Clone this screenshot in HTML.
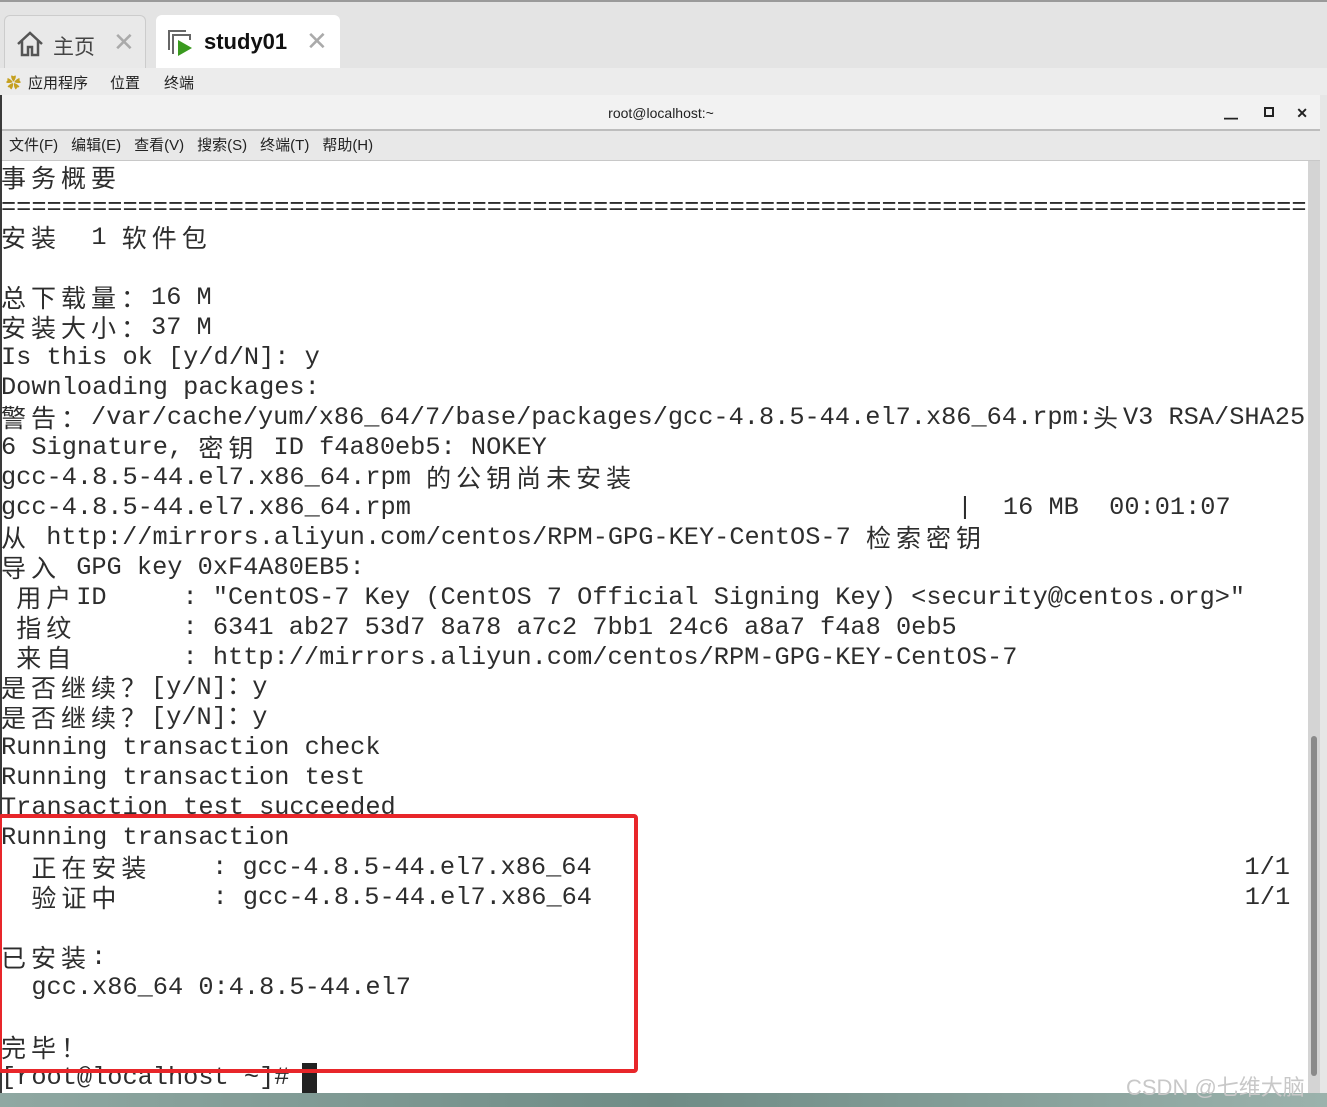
<!DOCTYPE html>
<html><head><meta charset="utf-8"><style>
*{margin:0;padding:0;box-sizing:border-box}
body{width:1327px;height:1107px;overflow:hidden;background:#e6e6e6;font-family:"Liberation Sans","Noto Sans CJK SC",sans-serif;position:relative}
.top{position:absolute;left:0;top:0;width:1327px;height:70px;background:#e4e4e4;border-top:2px solid #9a9a9a}
.tab{position:absolute;top:13px;height:57px;border-radius:6px 6px 0 0;font-size:21px;color:#444}
.bar2{position:absolute;left:0;top:68px;width:1327px;height:27px;background:#ececec;font-size:15px;color:#222}
.win{position:absolute;left:0;top:95px;width:1320px;height:1000px;background:#fff;border-left:2px solid #3a3a3a}
.title{position:absolute;left:0;top:0;width:100%;height:36px;background:#f2f2f2;border-bottom:2px solid #bdbdbd;text-align:center;font-size:14px;line-height:36px;color:#222}
.menu{position:absolute;left:0;top:36px;width:100%;height:30px;background:#e8e8e8;border-bottom:1px solid #c8c8c8;font-size:15px;line-height:30px;color:#222}
.menu span{margin-left:7px;margin-right:6px}
.sb{position:absolute;right:0;top:66px;width:12px;height:934px;background:#d4d4d4}
.thumb{position:absolute;left:3px;top:575px;width:6px;height:340px;background:#8a8a8a;border-radius:3px}
.term{position:absolute;left:1px;top:163px;width:1306px;font-family:"Liberation Mono",monospace;font-size:25.3px;color:#2d2d2d}
.l{height:30px;line-height:30px;white-space:pre;overflow:hidden}
.c{display:inline-block;vertical-align:top;height:30px;letter-spacing:5px;font-family:"Noto Sans CJK SC",sans-serif;line-height:28px;font-size:25px}
.bot{position:absolute;left:0;top:1093px;width:1327px;height:14px;background:linear-gradient(90deg,#8fa8a2,#6f8c86,#9bb2ac)}
.red{position:absolute;left:-2px;top:814px;width:640px;height:259px;border:4px solid #e8262a;border-radius:4px}
.cur{position:absolute;left:302px;top:1063px;width:15px;height:30px;background:#222}
</style></head><body>
<div class="top">
 <div class="tab" style="left:4px;width:142px;background:#e9e9e9;border:1px solid #ccc;border-bottom:none">
  <svg style="position:absolute;left:10px;top:14px" width="30" height="28" viewBox="0 0 30 28"><path d="M3 14 L15 3 L27 14 M7 11 V25 H13 V17 H17 V25 H23 V11" fill="none" stroke="#555" stroke-width="2.5"/></svg>
  <span style="position:absolute;left:48px;top:15px">主页</span>
  <span style="position:absolute;left:108px;top:11px;color:#aaa;font-size:26px">✕</span>
 </div>
 <div class="tab" style="left:156px;width:184px;background:#fff">
  <svg style="position:absolute;left:10px;top:13px" width="30" height="30" viewBox="0 0 30 30"><path d="M3 22 V3 H20 M7 26 V7 H24 V12" fill="none" stroke="#666" stroke-width="2"/><path d="M12 12 L26 20 L12 28 Z" fill="#3a9a1f"/></svg>
  <b style="position:absolute;left:48px;top:14px;color:#111;font-size:22px">study01</b>
  <span style="position:absolute;left:150px;top:11px;color:#aaa;font-size:26px">✕</span>
 </div>
</div>
<div class="bar2"><span style="position:absolute;left:6px;top:4px;color:#c5a020">✿</span><span style="position:absolute;left:28px;top:4px">应用程序</span><span style="position:absolute;left:110px;top:4px">位置</span><span style="position:absolute;left:164px;top:4px">终端</span></div>
<div class="win">
 <div class="title">root@localhost:~
  <span style="position:absolute;right:82px;top:0">▁</span>
  <span style="position:absolute;right:46px;top:12px;width:10px;height:10px;border:2px solid #222"></span>
  <span style="position:absolute;right:12px;top:0;font-weight:bold">✕</span>
 </div>
 <div class="menu"><span>文件(F)</span><span>编辑(E)</span><span>查看(V)</span><span>搜索(S)</span><span>终端(T)</span><span>帮助(H)</span></div>
 <div class="sb"><div class="thumb"></div></div>
</div>
<div class="term">
<div class="l"><span class="c">事务概要</span></div>
<div class="l">======================================================================================</div>
<div class="l"><span class="c">安装</span>  1 <span class="c">软件包</span></div>
<div class="l"> </div>
<div class="l"><span class="c">总下载量：</span>16 M</div>
<div class="l"><span class="c">安装大小：</span>37 M</div>
<div class="l">Is this ok [y/d/N]: y</div>
<div class="l">Downloading packages:</div>
<div class="l"><span class="c">警告：</span>/var/cache/yum/x86_64/7/base/packages/gcc-4.8.5-44.el7.x86_64.rpm:<span class="c">头</span>V3 RSA/SHA25</div>
<div class="l">6 Signature, <span class="c">密钥</span> ID f4a80eb5: NOKEY</div>
<div class="l">gcc-4.8.5-44.el7.x86_64.rpm <span class="c">的公钥尚未安装</span></div>
<div class="l">gcc-4.8.5-44.el7.x86_64.rpm                                    |  16 MB  00:01:07</div>
<div class="l"><span class="c">从</span> http://mirrors.aliyun.com/centos/RPM-GPG-KEY-CentOS-7 <span class="c">检索密钥</span></div>
<div class="l"><span class="c">导入</span> GPG key 0xF4A80EB5:</div>
<div class="l"> <span class="c">用户</span>ID     : "CentOS-7 Key (CentOS 7 Official Signing Key) &lt;security@centos.org&gt;"</div>
<div class="l"> <span class="c">指纹</span>       : 6341 ab27 53d7 8a78 a7c2 7bb1 24c6 a8a7 f4a8 0eb5</div>
<div class="l"> <span class="c">来自</span>       : http://mirrors.aliyun.com/centos/RPM-GPG-KEY-CentOS-7</div>
<div class="l"><span class="c">是否继续？</span>[y/N]：y</div>
<div class="l"><span class="c">是否继续？</span>[y/N]：y</div>
<div class="l">Running transaction check</div>
<div class="l">Running transaction test</div>
<div class="l">Transaction test succeeded</div>
<div class="l">Running transaction</div>
<div class="l">  <span class="c">正在安装</span>    : gcc-4.8.5-44.el7.x86_64                                           1/1</div>
<div class="l">  <span class="c">验证中</span>      : gcc-4.8.5-44.el7.x86_64                                           1/1</div>
<div class="l"> </div>
<div class="l"><span class="c">已安装</span>:</div>
<div class="l">  gcc.x86_64 0:4.8.5-44.el7</div>
<div class="l"> </div>
<div class="l"><span class="c">完毕！</span></div>
<div class="l">[root@localhost ~]# </div>
</div>
<div class="cur"></div>
<div class="red"></div>
<div class="bot"></div>
<div style="position:absolute;left:1126px;top:1070px;font-size:22px;color:#c8c8c8">CSDN @七维大脑</div>
</body></html>
